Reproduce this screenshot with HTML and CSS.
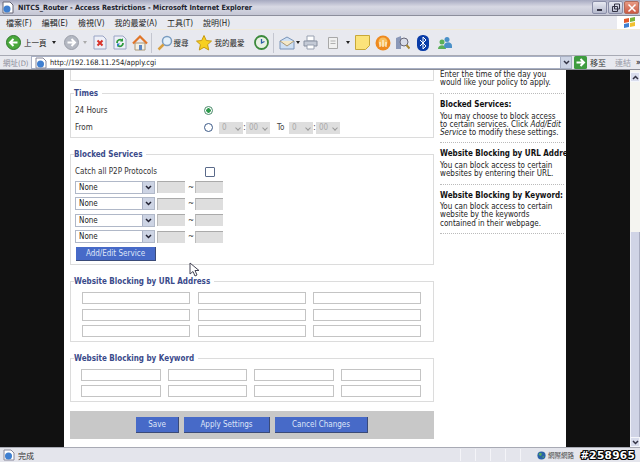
FILE: index.html
```html
<!DOCTYPE html>
<html lang="zh-Hant">
<head>
<meta charset="UTF-8" />
<title>NITCS_Router - Access Restrictions</title>
<link rel="stylesheet" href="styles.css">
</head>
<body>

<div class="window">
  <div class="titlebar">
    <svg class="title-icon" width="12" height="13" viewBox="0 0 12 13"><path d="M1 1h7l3 3v8H1z" fill="#fff" stroke="#667"/><circle cx="5" cy="8" r="3.5" fill="#3f7fd0"/></svg>
    <span class="title-text">NITCS_Router - Access Restrictions - Microsoft Internet Explorer</span>
    <span class="win-btn">
      <svg width="10" height="10" viewBox="0 0 10 10"><path d="M2 7h5" stroke="#334" stroke-width="2"/></svg>
    </span>
    <span class="win-btn">
      <svg width="10" height="10" viewBox="0 0 10 10"><path d="M3.500 1h5v5h-5zM1.500 3.500h5v5h-5z" fill="none" stroke="#334"/></svg>
    </span>
    <span class="win-btn close">
      <svg width="10" height="10" viewBox="0 0 10 10"><path d="M1.500 1.500l7 7M8.500 1.500l-7 7" stroke="#fff" stroke-width="1.500"/></svg>
    </span>
  </div>

  <div class="menubar">
    <span>檔案(F)</span><span>編輯(E)</span><span>檢視(V)</span><span>我的最愛(A)</span><span>工具(T)</span><span>說明(H)</span>
    <span class="xp-flag">
      <svg width="13" height="13" viewBox="0 0 13 13"><path d="M1 3l5-1v4l-5 1z" fill="#e2582a"/><path d="M7 2l5-1v4l-5 1z" fill="#7cb53c"/><path d="M1 8l5-1v4l-5 1z" fill="#3f7fd0"/><path d="M7 7l5-1v4l-5 1z" fill="#f2c12e"/></svg>
    </span>
  </div>

  <div class="toolbar">
    <svg class="ic back" width="15" height="15" viewBox="0 0 15 15"><circle cx="7.500" cy="7.500" r="7" fill="#4aa83c" stroke="#2f7a2b"/><path d="M11.500 7.500H5M7.500 4l-3.500 3.500 3.500 3.500" fill="none" stroke="#fff" stroke-width="2"/></svg>
    <span class="tb-label first">上一頁</span>
    <i class="caret c-back"></i>
    <svg class="ic fwd" width="15" height="15" viewBox="0 0 15 15"><circle cx="7.500" cy="7.500" r="7" fill="#b4b8c2" stroke="#9a9ea8"/><path d="M3.500 7.500H10M7.500 4l3.500 3.500-3.500 3.500" fill="none" stroke="#fff" stroke-width="2"/></svg>
    <i class="caret c-fwd muted"></i>
    <svg class="ic stop" width="14" height="15" viewBox="0 0 14 15"><path d="M1 1h9l3 3v10H1z" fill="#eef0f8" stroke="#9aa4c4"/><path d="M4.500 5.500l5 5M9.500 5.500l-5 5" stroke="#d8322a" stroke-width="2"/></svg>
    <svg class="ic refresh" width="14" height="15" viewBox="0 0 14 15"><path d="M1 1h9l3 3v10H1z" fill="#eef0f8" stroke="#9aa4c4"/><path d="M4 8a3 3 0 0 1 5-2.500M10 8a3 3 0 0 1-5 2.500" fill="none" stroke="#2e9a3c" stroke-width="1.800"/><path d="M10 3v3.500H7z" fill="#2e9a3c"/><path d="M4 12V8.500h3z" fill="#2e7fc8"/></svg>
    <svg class="ic home" width="16" height="16" viewBox="0 0 16 16"><path d="M3 8v7h10V8z" fill="#f4f0e4" stroke="#a89878"/><path d="M1 8.500L8 1.500l7 7" fill="none" stroke="#e0762a" stroke-width="2.200"/><path d="M7 10h3v5H7z" fill="#5a86c4"/></svg>
    <span class="tb-sep s1"></span>
    <svg class="ic search" width="16" height="16" viewBox="0 0 16 16"><circle cx="10" cy="6" r="4.500" fill="#e4f0fa" stroke="#7a9cc0" stroke-width="1.500"/><path d="M6.500 9.500L1.500 14.500" stroke="#d8a040" stroke-width="2.500"/></svg>
    <span class="tb-label">搜尋</span>
    <svg class="ic star" width="16" height="16" viewBox="0 0 16 16"><path d="M8 .5l2.300 5 5.200.6-3.900 3.500 1.100 5.400L8 12.300 3.300 15l1.100-5.400L.5 6.100l5.200-.6z" fill="#f8d020" stroke="#c89a10"/></svg>
    <span class="tb-label">我的最愛</span>
    <svg class="ic hist" width="15" height="15" viewBox="0 0 15 15"><circle cx="7.500" cy="7.500" r="6.500" fill="#e8f0e4" stroke="#3c8a3c" stroke-width="1.800"/><path d="M7.500 4v4l3-1.500" fill="none" stroke="#2a5ea8" stroke-width="1.300"/></svg>
    <span class="tb-sep s2"></span>
    <svg class="ic mail" width="16" height="14" viewBox="0 0 16 14"><path d="M1 5l7-4 7 4v8H1z" fill="#cfe0f4" stroke="#7a94b8"/><path d="M1 5l7 5 7-5" fill="#f4e8c8" stroke="#a89878"/></svg>
    <i class="caret c-mail"></i>
    <svg class="ic print" width="15" height="15" viewBox="0 0 15 15"><path d="M4 1h7v5H4z" fill="#fff" stroke="#98a0b0"/><path d="M1 6h13v5H1z" fill="#c4cad6" stroke="#8890a0"/><path d="M4 10h7v4H4z" fill="#fff" stroke="#98a0b0"/></svg>
    <svg class="ic edit" width="10" height="12" viewBox="0 0 10 12"><path d="M.5.500h9v11h-9z" fill="#f0f0f0" stroke="#a8a8a8"/><path d="M2.500 4h5M2.500 6.500h5" stroke="#b0b0b0"/></svg>
    <i class="caret c-edit"></i>
    <svg class="ic note" width="15" height="15" viewBox="0 0 15 15"><path d="M.5.500h14v10l-4 4H.5z" fill="#fbe37a" stroke="#c8a838"/></svg>
    <svg class="ic orange" width="16" height="16" viewBox="0 0 16 16"><circle cx="8" cy="8" r="7.500" fill="#ee8a20"/><circle cx="8" cy="7" r="4.500" fill="#f8c060"/><path d="M5 12V7M8 12V5M11 12V7" stroke="#fff"/></svg>
    <svg class="ic tool" width="15" height="15" viewBox="0 0 15 15"><path d="M1 14V3l5-2v13z" fill="#8a98b8"/><circle cx="9" cy="7" r="4" fill="#d8dce8" stroke="#667"/><path d="M11.500 10l3 3.500" stroke="#a88830" stroke-width="2"/></svg>
    <svg class="ic bt" width="12" height="16" viewBox="0 0 12 16"><rect width="12" height="16" rx="5.500" fill="#0a3ca8"/><path d="M3 5l6 6-3 3V2l3 3-6 6" fill="none" stroke="#fff"/></svg>
    <svg class="ic msn" width="16" height="14" viewBox="0 0 16 14"><circle cx="5" cy="6" r="2.500" fill="#5ab05a"/><circle cx="10" cy="3.500" r="2.500" fill="#4a90c8"/><path d="M1 13c0-5 8-5 8 0z" fill="#5ab05a"/><path d="M7 10c0-5 8-5 8 0v2H8z" fill="#4a90c8"/></svg>
  </div>

  <div class="addressbar">
    <span class="addr-label">網址(D)</span>
    <div class="addr-box">
      <svg width="12" height="12" viewBox="0 0 12 12"><path d="M1 1h7l3 3v7H1z" fill="#fff" stroke="#889"/><circle cx="5.500" cy="7" r="3.500" fill="#3f7fd0"/></svg>
      <span class="addr-url">http://192.168.11.254/apply.cgi</span>
      <span class="combo-btn small"><svg width="7" height="5" viewBox="0 0 7 5"><path d="M1 1l2.500 2.500L6 1" fill="none" stroke="#334" stroke-width="1.500"/></svg></span>
    </div>
    <svg class="go-icon" width="13" height="13" viewBox="0 0 13 13"><rect width="13" height="13" rx="1.500" fill="#3f9c3f"/><path d="M2.500 6.500h7M6.500 3l3.500 3.500L6.500 10" fill="none" stroke="#fff" stroke-width="2"/></svg>
    <span class="go-label">移至</span>
    <span class="links-label">連結</span>
    <span class="more">»</span>
  </div>

  <div class="viewport">
    <div class="gutter left"></div>

    <div class="page">
      <main class="main">
        <fieldset class="box cut"></fieldset>

        <fieldset class="box times">
          <legend>Times</legend>
          <div class="time-row">
            <label>24 Hours</label>
            <span class="radio on"></span>
          </div>
          <div class="time-row">
            <label>From</label>
            <span class="radio"></span>
            <span class="fake-sel s-hour">0</span><span class="colon">:</span>
            <span class="fake-sel s-min">00</span>
            <span class="to">To</span>
            <span class="fake-sel s-hour">0</span><span class="colon">:</span>
            <span class="fake-sel s-min">00</span>
          </div>
        </fieldset>

        <fieldset class="box services">
          <legend>Blocked Services</legend>
          <div class="p2p-row">
            <label>Catch all P2P Protocols</label>
            <span class="check"></span>
          </div>
          <div class="svc-row"><span class="combo">None<i class="combo-btn"><svg width="7" height="5" viewBox="0 0 7 5"><path d="M1 1l2.500 2.500L6 1" fill="none" stroke="#223" stroke-width="1.500"/></svg></i></span><span class="port"></span><span class="tilde">~</span><span class="port"></span></div>
          <div class="svc-row"><span class="combo">None<i class="combo-btn"><svg width="7" height="5" viewBox="0 0 7 5"><path d="M1 1l2.500 2.500L6 1" fill="none" stroke="#223" stroke-width="1.500"/></svg></i></span><span class="port"></span><span class="tilde">~</span><span class="port"></span></div>
          <div class="svc-row"><span class="combo">None<i class="combo-btn"><svg width="7" height="5" viewBox="0 0 7 5"><path d="M1 1l2.500 2.500L6 1" fill="none" stroke="#223" stroke-width="1.500"/></svg></i></span><span class="port"></span><span class="tilde">~</span><span class="port"></span></div>
          <div class="svc-row"><span class="combo">None<i class="combo-btn"><svg width="7" height="5" viewBox="0 0 7 5"><path d="M1 1l2.500 2.500L6 1" fill="none" stroke="#223" stroke-width="1.500"/></svg></i></span><span class="port"></span><span class="tilde">~</span><span class="port"></span></div>
          <button class="blue add-btn">Add/Edit Service</button>
        </fieldset>

        <fieldset class="box urls">
          <legend>Website Blocking by URL Address</legend>
          <div class="url-grid">
            <span class="field"></span><span class="field"></span><span class="field"></span>
            <span class="field"></span><span class="field"></span><span class="field"></span>
            <span class="field"></span><span class="field"></span><span class="field"></span>
          </div>
        </fieldset>

        <fieldset class="box keywords">
          <legend>Website Blocking by Keyword</legend>
          <div class="kw-grid">
            <span class="field"></span><span class="field"></span><span class="field"></span><span class="field"></span>
            <span class="field"></span><span class="field"></span><span class="field"></span><span class="field"></span>
          </div>
        </fieldset>

        <div class="actions">
          <button class="blue save">Save</button>
          <button class="blue apply">Apply Settings</button>
          <button class="blue cancel">Cancel Changes</button>
        </div>
      </main>

      <aside class="help">
        <p class="help-cut">Enter the time of the day you would like your policy to apply.</p>
        <h4>Blocked Services:</h4>
        <p>You may choose to block access to certain services. Click <em>Add/Edit Service</em> to modify these settings.</p>
        <h4>Website Blocking by URL Address:</h4>
        <p>You can block access to certain websites by entering their URL.</p>
        <h4>Website Blocking by Keyword:</h4>
        <p>You can block access to certain website by the keywords contained in their webpage.</p>
      </aside>
    </div>

    <div class="gutter right"></div>

    <div class="scrollbar">
      <span class="sb-btn"><svg width="7" height="5" viewBox="0 0 7 5"><path d="M1 4l2.500-2.500L6 4" fill="none" stroke="#334" stroke-width="1.500"/></svg></span>
      <span class="sb-track"></span>
      <span class="sb-thumb"></span>
      <span class="sb-btn"><svg width="7" height="5" viewBox="0 0 7 5"><path d="M1 1l2.500 2.500L6 1" fill="none" stroke="#334" stroke-width="1.500"/></svg></span>
    </div>

    <svg class="cursor" width="11" height="15" viewBox="0 0 11 15"><path d="M1 1v11l3-2.500 2 4.500 2-1-2-4.500h4z" fill="#fff" stroke="#445"/></svg>
  </div>

  <div class="statusbar">
    <svg width="12" height="12" viewBox="0 0 12 12"><path d="M1 1h7l3 3v7H1z" fill="#fff" stroke="#889"/><circle cx="5.500" cy="7" r="3.500" fill="#3f7fd0"/></svg>
    <span class="status-text">完成</span>
    <span class="st-cell c1"></span><span class="st-cell"></span><span class="st-cell"></span><span class="st-cell"></span><span class="st-cell"></span>
    <svg class="globe" width="9" height="9" viewBox="0 0 11 11"><circle cx="5.500" cy="5.500" r="5" fill="#2a62a8"/><path d="M3 2l3 1-1 3-3-1zM7 6l2 1-2 2z" fill="#5ab05a"/></svg>
    <span class="zone">網際網路</span>
  </div>

  <span class="watermark">#258965</span>
</div>

</body>
</html>
```

FILE: styles.css
```css
html, body {
  margin: 0;
  padding: 0;
  overflow: hidden;
}

body {
  width: 640px;
  height: 462px;
  font-family: "DejaVu Sans Condensed", "DejaVu Sans", "Noto Sans CJK TC", sans-serif;
}

.window {
  position: relative;
  width: 640px;
  height: 462px;
  display: flex;
  flex-direction: column;
  background: #e6e7ee;
  overflow: hidden;
}

/* title bar */
.titlebar {
  height: 16px;
  flex: none;
  display: flex;
  align-items: center;
  padding: 0 1px 0 2px;
  background: linear-gradient(#a6a9c0, #d8d9e4 45%, #c4c6d4);
  border-bottom: 1px solid #8c8e9c;
  box-sizing: border-box;
}

.title-text {
  flex: 1;
  margin-left: 4px;
  font-size: 7.2px;
  font-weight: bold;
  color: #20222c;
  white-space: nowrap;
}

.win-btn {
  width: 13px;
  height: 11px;
  margin-left: 1px;
  display: flex;
  align-items: center;
  justify-content: center;
  background: linear-gradient(#e8eaf2, #b4b8cc);
  border: 1px solid #8a8ea8;
  border-radius: 2px;
}

.win-btn.close {
  background: linear-gradient(#e89a84, #cc5a44);
  border-color: #b06a5a;
}

/* menu */
.menubar {
  height: 14px;
  flex: none;
  display: flex;
  align-items: center;
  padding-left: 6px;
  gap: 10px;
  font-size: 8px;
  color: #222;
  background: #e9eaf0;
  border-bottom: 1px solid #f0ead8;
  box-sizing: border-box;
}

.xp-flag {
  margin-left: auto;
  width: 24px;
  height: 13px;
  margin-right: -1px;
  background: #fff;
  display: flex;
  justify-content: center;
}

/* toolbar */
.toolbar {
  height: 26px;
  flex: none;
  display: flex;
  align-items: center;
  padding-left: 6px;
  background: #e8e9ef;
  border-bottom: 1px solid #a8aab4;
  box-sizing: border-box;
}

.ic { flex: none; }

.tb-label {
  font-size: 7.500px;
  color: #222;
  margin-left: 1px;
  white-space: nowrap;
}

.tb-label.first { margin-left: 3px; }

.tb-sep {
  width: 1px;
  height: 20px;
  background: #c4c6d0;
  flex: none;
}

.caret {
  width: 0;
  height: 0;
  border: 2.5px solid transparent;
  border-top: 3px solid #222;
  border-bottom: 0;
}

.caret.muted { border-top-color: #aaa; }
.c-back { margin-left: 5px; }
.fwd { margin-left: 8px; }
.c-fwd { margin-left: 4px; }
.stop { margin-left: 6px; }
.refresh { margin-left: 6px; }
.home { margin-left: 5px; }
.s1 { margin-left: 3px; }
.search { margin-left: 5px; }
.star { margin-left: 7px; }
.star + .tb-label { margin-left: 3px; }
.hist { margin-left: 9px; }
.s2 { margin-left: 4px; }
.mail { margin-left: 5px; }
.c-mail { margin-left: 1px; }
.print { margin-left: 3px; }
.edit { margin-left: 10px; }
.c-edit { margin-left: 8px; }
.note { margin-left: 5px; }
.orange { margin-left: 5px; }
.tool { margin-left: 4px; }
.bt { margin-left: 7px; }
.msn { margin-left: 8px; }

/* address bar */
.addressbar {
  height: 14px;
  flex: none;
  display: flex;
  align-items: center;
  background: #e8e9ef;
  box-sizing: border-box;
  border-bottom: 1px solid #8c8e98;
  font-size: 8px;
  white-space: nowrap;
}

.addr-label {
  width: 31px;
  flex: none;
  padding-left: 3px;
  box-sizing: border-box;
  font-size: 7.500px;
  color: #8a8c98;
}

.addr-box {
  width: 541px;
  height: 13px;
  flex: none;
  display: flex;
  align-items: center;
  gap: 3px;
  padding-left: 3px;
  box-sizing: border-box;
  background: #fff;
  border: 1px solid #a8b0c4;
}

.addr-url {
  flex: 1;
  font-size: 7.500px;
  color: #222;
}

.go-icon {
  margin-left: 2px;
  flex: none;
}

.go-label {
  margin-left: 3px;
  color: #333;
}

.links-label {
  margin-left: 9px;
  color: #9a9ca8;
}

.more {
  margin-left: 5px;
  font-weight: bold;
  color: #333;
}

/* page area */
.viewport {
  position: relative;
  flex: 1;
  display: flex;
  min-height: 0;
  overflow: hidden;
  background: #fff;
}

.gutter {
  background: #111;
  flex: none;
}

.gutter.left { width: 64px; }
.gutter.right { width: 64px; }

.page {
  width: 502px;
  flex: none;
  display: flex;
  background: #fff;
}

.main {
  width: 364px;
  margin-left: 6px;
  flex: none;
  color: #333;
  font-size: 8px;
}

.box {
  margin: 0 0 12px;
  padding: 0 4px;
  border: 1px solid #dcdcdc;
  box-sizing: border-box;
}

.box legend {
  padding: 0 4px 0 0;
  margin-left: -1px;
  font-size: 8px;
  font-weight: bold;
  color: #3a4a8a;
  white-space: nowrap;
}

.box.cut {
  height: 12px;
  margin-top: -1px;
  margin-bottom: 8px;
  border-top: 0;
}

.times { height: 49px; }
.services { height: 115px; }
.urls { height: 65px; }
.keywords { height: 48px; margin-bottom: 9px; }

.times { padding-top: 4px; }
.services { padding-top: 5px; }
.url-grid, .kw-grid { margin-top: 2px; }

.time-row {
  height: 17px;
  display: flex;
  align-items: center;
}

.time-row label { width: 129px; }

.radio {
  width: 7px;
  height: 7px;
  border: 1px solid #3c5a88;
  border-radius: 50%;
  background: #fff;
  flex: none;
}

.radio.on {
  border-color: #4a8a6a;
  background: radial-gradient(circle, #2e9a4c 0 2px, #fff 2.5px);
}

.fake-sel {
  height: 12px;
  box-sizing: border-box;
  background: #dedede;
  color: #aaa;
  line-height: 12px;
  padding-left: 3px;
  position: relative;
}

.fake-sel::after {
  content: "";
  position: absolute;
  right: 3px;
  top: 4px;
  width: 3px;
  height: 3px;
  border-right: 1px solid #999;
  border-bottom: 1px solid #999;
  transform: rotate(45deg);
}

.s-hour { width: 24px; }
.s-min { width: 24px; }
.radio + .fake-sel { margin-left: 6px; }

.colon {
  width: 3px;
  text-align: center;
}

.to {
  width: 19px;
  padding-left: 7px;
  box-sizing: border-box;
  color: #444;
}

.p2p-row {
  height: 15px;
  display: flex;
  align-items: center;
}

.p2p-row label { width: 130px; }

.check {
  width: 8px;
  height: 8px;
  border: 1px solid #5a6a8a;
  background: #fff;
  border-radius: 1px;
}

.svc-row {
  height: 16.5px;
  display: flex;
  align-items: center;
}

.combo {
  position: relative;
  width: 80px;
  height: 13px;
  line-height: 12px;
  padding-left: 3px;
  box-sizing: border-box;
  border: 1px solid #b0b8c8;
  background: #fff;
  color: #222;
}

.combo-btn {
  position: absolute;
  right: 0;
  top: 0;
  bottom: 0;
  width: 11px;
  display: flex;
  align-items: center;
  justify-content: center;
  background: #cdd4e4;
  border-left: 1px solid #a8b0c4;
}

.combo-btn.small {
  position: static;
  height: 11px;
  width: 10px;
  flex: none;
}

.port {
  width: 28px;
  height: 12px;
  margin-left: 2px;
  background: #dedede;
  border-top: 1px solid #aaa;
  border-left: 1px solid #bbb;
  box-sizing: border-box;
}

.tilde {
  width: 8px;
  margin-left: 2px;
  text-align: center;
}

.tilde + .port { margin-left: 0; }

.blue {
  display: block;
  height: 14px;
  padding: 0;
  font-family: "DejaVu Sans Condensed", "DejaVu Sans", sans-serif;
  font-size: 8px;
  color: #dfe6f8;
  background: #476ac8;
  border: 0;
  border-bottom: 1px solid #3a4a78;
  border-right: 1px solid #3a4a78;
}

.add-btn {
  width: 80px;
  margin: 2px 0 0 1px;
}

.url-grid {
  display: grid;
  grid-template-columns: repeat(3, 108px);
  gap: 4.500px 7.500px;
  padding: 4px 0 0 7px;
}

.kw-grid {
  display: grid;
  grid-template-columns: repeat(4, 79.500px);
  gap: 4px 7.200px;
  padding: 4px 0 0 6px;
}

.field {
  height: 12px;
  border: 1px solid #c4c4c4;
  box-sizing: border-box;
  background: #fff;
}

.actions {
  height: 28px;
  display: flex;
  align-items: center;
  gap: 5px;
  padding-left: 66px;
  box-sizing: border-box;
  background: #c8c8c8;
}

.actions .blue { height: 16px; }
.save { width: 43px; }
.apply { width: 86px; }
.cancel { width: 93px; }

/* help column */
.help {
  width: 124px;
  margin-left: 6px;
  flex: none;
  color: #222;
  font-size: 8px;
  line-height: 8.300px;
}

.help p {
  margin: 0;
  padding: 1.500px 0 5px;
  border-bottom: 1px dotted #bbb;
}

.help p.help-cut {
  margin-top: -1px;
  padding-bottom: 6px;
}

.help h4 {
  margin: 6px 0 2px;
  font-size: 8px;
  line-height: 9px;
  color: #111;
  white-space: nowrap;
}

/* scroll bar */
.scrollbar {
  position: absolute;
  right: 0;
  top: 0;
  bottom: 0;
  width: 10px;
  display: flex;
  flex-direction: column;
  background: #f4f4f0;
}

.sb-btn {
  height: 10px;
  flex: none;
  display: flex;
  align-items: center;
  justify-content: center;
  background: #d8dcec;
  border: 1px solid #f4f6fb;
  box-sizing: border-box;
}

.sb-btn:first-child { margin-top: 2px; }
.sb-track { height: 150px; flex: none; }

.sb-thumb {
  flex: 1;
  background: #d0d4e6;
  border-left: 1px solid #eef0f8;
  border-right: 1px solid #a8acc0;
}

.cursor {
  position: absolute;
  left: 189px;
  top: 192px;
}

/* status bar */
.statusbar {
  height: 15px;
  flex: none;
  display: flex;
  align-items: center;
  padding-left: 3px;
  font-size: 8px;
  color: #333;
  background: #e4e5ec;
  border-top: 1px solid #a8aab4;
  box-sizing: border-box;
}

.status-text {
  margin-left: 3px;
  width: 442px;
  flex: none;
}

.st-cell {
  width: 15px;
  height: 12px;
  flex: none;
  border-left: 1px solid #f4f4f8;
  box-sizing: border-box;
}

.globe {
  margin-left: 2px;
  flex: none;
}

.zone {
  margin-left: 2px;
  font-size: 6.500px;
  color: #444;
}

.watermark {
  position: absolute;
  right: 5px;
  bottom: 1px;
  font-family: "DejaVu Sans", sans-serif;
  font-size: 10.500px;
  font-weight: bold;
  line-height: 12px;
  color: #fff;
  letter-spacing: 0.3px;
  text-shadow: 1px 0 #000, -1px 0 #000, 0 1px #000, 0 -1px #000, 1px 1px #000, -1px -1px #000, 1px -1px #000, -1px 1px #000;
}
```
